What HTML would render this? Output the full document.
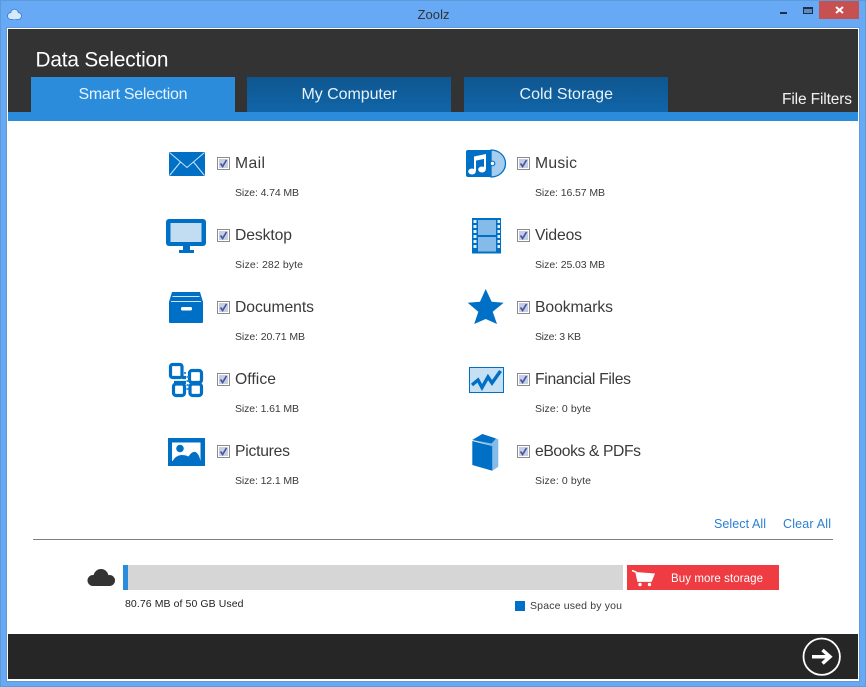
<!DOCTYPE html>
<html><head><meta charset="utf-8"><title>Zoolz</title>
<style>
html,body{margin:0;padding:0;background:#fff}
svg{display:block}
text{font-family:"Liberation Sans",sans-serif}
.l{font-size:15.700px;fill:#3a3a3a}
.s{font-size:10.500px;fill:#3a3a3a}
</style></head><body>
<svg width="866" height="687" viewBox="0 0 866 687" xmlns="http://www.w3.org/2000/svg">
<defs>
<linearGradient id="tab" x1="0" y1="0" x2="0" y2="1"><stop offset="0" stop-color="#0f568f"/><stop offset="1" stop-color="#1065a8"/></linearGradient>
<g id="cb">
<rect x=".5" y=".5" width="12" height="12" fill="#fff" stroke="#8c8c8c"/>
<rect x="2" y="2" width="9" height="9" fill="#c5cee2"/>
<path d="M3.500 6.500 L5.600 9.500 L9.500 3" fill="none" stroke="#4656a0" stroke-width="1.700"/>
</g>
</defs>
<!-- window -->
<rect x="0" y="0" width="866" height="687" fill="#5b9bd8"/>
<rect x="1" y="1" width="864" height="685" fill="#67a9f4"/>
<rect x="6" y="27" width="854" height="655" fill="#5f9bd6"/>
<rect x="7" y="28" width="852" height="653" fill="#fff"/>
<!-- title bar -->
<g fill="#d6e9fb" stroke="#3f86cf" stroke-width="1">
<circle cx="11" cy="16" r="3.500"/><circle cx="18" cy="16" r="3.500"/><circle cx="14.500" cy="13" r="3.800"/>
</g>
<g fill="#d6e9fb"><circle cx="11" cy="16" r="3"/><circle cx="18" cy="16" r="3"/><circle cx="14.500" cy="13" r="3.300"/><rect x="10" y="14" width="9" height="5"/></g>
<text x="433.500" y="19" font-size="13px" fill="#333" text-anchor="middle" textLength="32" lengthAdjust="spacing">Zoolz</text>
<rect x="780" y="12" width="7" height="2" fill="#1f2f45"/>
<rect x="803.500" y="7.500" width="9" height="6" fill="#5d8cc4" stroke="#1f2f45" stroke-width="1"/>
<rect x="803" y="7" width="10" height="2" fill="#1f2f45"/>
<rect x="819" y="1" width="40" height="18" fill="#c75050"/>
<path d="M836 7 L843 13 M843 7 L836 13" stroke="#fff" stroke-width="2"/>
<!-- header -->
<rect x="8" y="29" width="850" height="83" fill="#333"/>
<rect x="8" y="112" width="850" height="9" fill="#2a8cdb"/>
<text x="35.500" y="66.500" font-size="20.800px" fill="#fff" textLength="133" lengthAdjust="spacing">Data Selection</text>
<rect x="31" y="77" width="204" height="35" fill="#2a8cdb"/>
<rect x="247" y="77" width="204" height="35" fill="url(#tab)"/>
<rect x="464" y="77" width="204" height="35" fill="url(#tab)"/>
<text x="78.500" y="99" font-size="16px" fill="#e6f2fc" textLength="109" lengthAdjust="spacing">Smart Selection</text>
<text x="301.500" y="99" font-size="16px" fill="#e6f2fc" textLength="95.500" lengthAdjust="spacing">My Computer</text>
<text x="519.500" y="99" font-size="16px" fill="#e6f2fc" textLength="93.500" lengthAdjust="spacing">Cold Storage</text>
<text x="782" y="104" font-size="15.500px" fill="#f2f2f2" textLength="70" lengthAdjust="spacing">File Filters</text>

<!-- Mail -->
<g>
<rect x="169" y="152" width="36" height="24" fill="#0070c6"/>
<path d="M169.500 152.500 L187 167.500 L204.500 152.500 M169.500 175.500 L180.500 162 M204.500 175.500 L193.500 162" fill="none" stroke="#cfe4f6" stroke-width="1"/>
</g>
<!-- Desktop -->
<g>
<rect x="166" y="219" width="40" height="27" rx="3" fill="#0070c6"/>
<rect x="170.500" y="223" width="31" height="19" fill="#c2dcf2"/>
<rect x="183" y="246" width="7" height="5" fill="#0070c6"/>
<rect x="179" y="250" width="15" height="3" fill="#0070c6"/>
</g>
<!-- Documents -->
<g>
<path d="M172 292 H200 L203 302 V322 Q203 323 202 323 H170 Q169 323 169 322 V302 Z" fill="#0070c6"/>
<path d="M172.500 296.500 H199.500 M171 301.500 H201" fill="none" stroke="#cfe4f6" stroke-width="1"/>
<rect x="181" y="307" width="11" height="3.500" rx="1.500" fill="#fff"/>
</g>
<!-- Office -->
<g fill="none" stroke="#0070c6" stroke-width="3.200">
<rect x="170.500" y="364.500" width="11.500" height="13" rx="2"/>
<rect x="189.500" y="370.500" width="12" height="12" rx="2.500"/>
<rect x="173.500" y="384" width="11" height="11.500" rx="2.500"/>
<rect x="190" y="384" width="11.500" height="11.500" rx="2.500"/>
<path d="M182 377.500 H186 M186 382.500 H174"/>
</g>
<g fill="#3d93d6"><rect x="184" y="372" width="2" height="2"/><rect x="186.500" y="376" width="2" height="2"/><rect x="186.500" y="380" width="2" height="2"/><rect x="186.500" y="384" width="2" height="2"/><rect x="186.500" y="388" width="2" height="2"/></g>
<!-- Pictures -->
<g>
<rect x="168" y="438" width="37" height="28" fill="#0070c6"/>
<rect x="172" y="442.500" width="28.500" height="18.500" fill="#fff"/>
<circle cx="180" cy="448.500" r="3.800" fill="#0070c6"/>
<path d="M172.500 461 Q176 455.500 181 455 Q186 455 188.500 456.500 Q192 451 195.500 452 Q199 453.500 200.500 461 Z" fill="#0070c6"/>
</g>
<!-- Music -->
<g>
<path d="M491 150 A14.500 13.500 0 0 1 491 177 Z" fill="#a7cdee" stroke="#0070c6" stroke-width="1.300"/>
<path d="M468 150 H491 V177 H468 Q466 177 466 175 V152 Q466 150 468 150 Z" fill="#0070c6"/>
<circle cx="492.500" cy="163.500" r="2.300" fill="#fff" stroke="#0070c6" stroke-width="1.200"/>
<ellipse cx="472" cy="171.500" rx="3.800" ry="3" fill="#fff"/>
<ellipse cx="482" cy="169.500" rx="3.800" ry="3" fill="#fff"/>
<path d="M475 171 V158 L485 155.500 V169" fill="none" stroke="#fff" stroke-width="2"/>
<path d="M474 156.500 L486 154 V158.500 L474 161 Z" fill="#fff"/>
</g>
<!-- Videos -->
<g>
<rect x="472" y="218" width="29" height="35.500" fill="#0070c6"/>
<rect x="478" y="220" width="18" height="15" fill="#85bbe8"/>
<rect x="478" y="237" width="18" height="14.500" fill="#85bbe8"/>
<g fill="#e3f0fb">
<rect x="473.500" y="220" width="3" height="3"/><rect x="473.500" y="225" width="3" height="3"/><rect x="473.500" y="230" width="3" height="3"/><rect x="473.500" y="235" width="3" height="3"/><rect x="473.500" y="240" width="3" height="3"/><rect x="473.500" y="245" width="3" height="3"/>
<rect x="497.500" y="220" width="2.500" height="3"/><rect x="497.500" y="225" width="2.500" height="3"/><rect x="497.500" y="230" width="2.500" height="3"/><rect x="497.500" y="235" width="2.500" height="3"/><rect x="497.500" y="240" width="2.500" height="3"/><rect x="497.500" y="245" width="2.500" height="3"/>
</g>
</g>
<!-- Bookmarks -->
<path d="M485.700 289 L491.700 301.700 L503.700 302.700 L492.700 311.700 L497 324 L485.700 319 L474.200 324 L478.300 311.700 L467.700 302.700 L480 301.700 Z" fill="#0070c6"/>
<!-- Financial -->
<g>
<rect x="469" y="367" width="35" height="26" fill="#c5dff3"/>
<rect x="469.500" y="367.500" width="34" height="25" fill="none" stroke="#0070c6" stroke-width="1"/>
<path d="M472 385 L478 380 L482 387.500 L488 377 L492 383 L500.500 371" fill="none" stroke="#0070c6" stroke-width="3.400"/>
</g>
<!-- eBooks -->
<g>
<path d="M472.300 440 L482.300 434 L498.300 439.300 V466.700 L492.300 470.700 V446 Z" fill="#85bbe8"/>
<path d="M472.300 440 L482.300 434 L496 438.500 L491.500 443.500 Z" fill="#0070c6"/>
<path d="M472.300 441 L492.300 446 V470.700 L472.300 465 Z" fill="#0070c6"/>
</g>

<!-- left column -->
<use href="#cb" x="217" y="157"/><text class="l" x="235" y="168" textLength="30" lengthAdjust="spacing">Mail</text><text class="s" x="235" y="196" textLength="64" lengthAdjust="spacing">Size: 4.74 MB</text>
<use href="#cb" x="217" y="229"/><text class="l" x="235" y="240" textLength="57" lengthAdjust="spacing">Desktop</text><text class="s" x="235" y="268" textLength="68" lengthAdjust="spacing">Size: 282 byte</text>
<use href="#cb" x="217" y="301"/><text class="l" x="235" y="312" textLength="79" lengthAdjust="spacing">Documents</text><text class="s" x="235" y="340" textLength="70" lengthAdjust="spacing">Size: 20.71 MB</text>
<use href="#cb" x="217" y="373"/><text class="l" x="235" y="384" textLength="41" lengthAdjust="spacing">Office</text><text class="s" x="235" y="412" textLength="64" lengthAdjust="spacing">Size: 1.61 MB</text>
<use href="#cb" x="217" y="445"/><text class="l" x="235" y="456" textLength="55" lengthAdjust="spacing">Pictures</text><text class="s" x="235" y="484" textLength="64" lengthAdjust="spacing">Size: 12.1 MB</text>
<!-- right column -->
<use href="#cb" x="517" y="157"/><text class="l" x="535" y="168" textLength="42" lengthAdjust="spacing">Music</text><text class="s" x="535" y="196" textLength="70" lengthAdjust="spacing">Size: 16.57 MB</text>
<use href="#cb" x="517" y="229"/><text class="l" x="535" y="240" textLength="47" lengthAdjust="spacing">Videos</text><text class="s" x="535" y="268" textLength="70" lengthAdjust="spacing">Size: 25.03 MB</text>
<use href="#cb" x="517" y="301"/><text class="l" x="535" y="312" textLength="78" lengthAdjust="spacing">Bookmarks</text><text class="s" x="535" y="340" textLength="46" lengthAdjust="spacing">Size: 3 KB</text>
<use href="#cb" x="517" y="373"/><text class="l" x="535" y="384" textLength="96" lengthAdjust="spacing">Financial Files</text><text class="s" x="535" y="412" textLength="56" lengthAdjust="spacing">Size: 0 byte</text>
<use href="#cb" x="517" y="445"/><text class="l" x="535" y="456" textLength="106" lengthAdjust="spacing">eBooks &amp; PDFs</text><text class="s" x="535" y="484" textLength="56" lengthAdjust="spacing">Size: 0 byte</text>

<!-- actions -->
<text x="714" y="528" font-size="12.500px" fill="#2a7fd0" textLength="52" lengthAdjust="spacing">Select All</text>
<text x="783" y="528" font-size="12.500px" fill="#2a7fd0" textLength="48" lengthAdjust="spacing">Clear All</text>
<rect x="33" y="539" width="800" height="1" fill="#808080"/>

<!-- storage -->
<g fill="#333"><circle cx="93" cy="580.500" r="5.500"/><circle cx="101" cy="576.500" r="7.500"/><circle cx="109.500" cy="580.500" r="5.500"/><rect x="92" y="578" width="18" height="8"/></g>
<rect x="123" y="565" width="500" height="25" fill="#d6d6d6"/>
<rect x="123" y="565" width="5" height="25" fill="#2a8cdb"/>
<rect x="627" y="565" width="152" height="25" fill="#ef3b42"/>
<path d="M632 570.500 L636 572 L638 581 H651" fill="none" stroke="#fff" stroke-width="1.500"/>
<path d="M635.500 572 L655 573.500 L651.700 581.700 H637.500 Z" fill="#fff"/>
<circle cx="640" cy="584.500" r="1.700" fill="#fff"/><circle cx="649.500" cy="584.500" r="1.700" fill="#fff"/>
<text x="671" y="582" font-size="11.500px" fill="#fff" textLength="92" lengthAdjust="spacing">Buy more storage</text>
<text x="125" y="607" font-size="10.500px" fill="#222" textLength="118.500" lengthAdjust="spacing">80.76 MB of 50 GB Used</text>
<rect x="515" y="601" width="10" height="10" fill="#0070c6"/>
<text x="530" y="609" font-size="10.500px" fill="#3a3a3a" textLength="92" lengthAdjust="spacing">Space used by you</text>

<!-- footer -->
<rect x="8" y="634" width="850" height="45" fill="#262626"/>
<circle cx="821.700" cy="656.700" r="18.200" fill="none" stroke="#fff" stroke-width="1.800"/>
<path d="M812 656.700 H829 M822.500 650 L830 656.700 L822.500 663.400" fill="none" stroke="#fff" stroke-width="3.500"/>
</svg>
</body></html>
